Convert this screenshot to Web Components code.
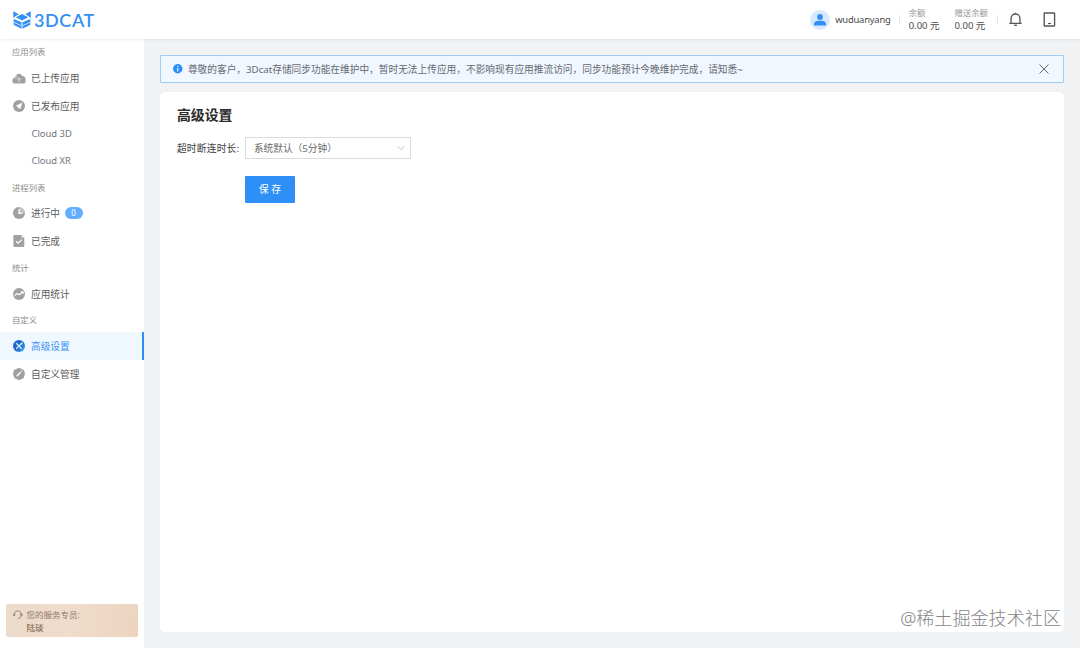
<!DOCTYPE html>
<html lang="zh-CN">
<head>
<meta charset="utf-8">
<title>3DCAT - 高级设置</title>
<style>
  html, body { margin: 0; height: 100%; overflow: hidden; }
  body {
    font-family: "Noto Sans", "Noto Sans CJK SC", sans-serif;
    font-size: 9.7px;
    color: #555;
    background: #f0f2f3;
  }
</style>
</head>
<body>
<cat-app></cat-app>

<script>
/* Icon shapes, all drawn on a 12x12 grid */
const ICONS = {
  upload: '<path fill="#a0a0a0" d="M2.700 4.300A3.400 3.400 0 0 1 9.200 4C11.300 4.200 12.600 5.400 12.600 7.500v1.700c0 1.500-.9 2.300-2.200 2.300H1.700C.3 11.500-.6 10.600-.6 9.200-.6 6.500.8 5 2.700 4.300z"/><path stroke="#e4e4e4" stroke-width="1" fill="none" d="M6 10.200V6.200M4.200 7.500 6 5.700l1.800 1.800M-.2 6.400 4.200 4.500"/>',
  publish: '<circle cx="6" cy="6" r="6" fill="#a0a0a0"/><path fill="#fff" d="M9.300 2.600 7.400 9.200 5.700 7.500 5 8.800 4.700 6.800 2.500 6z"/>',
  running: '<circle cx="6" cy="6" r="6" fill="#a0a0a0"/><path fill="#fff" opacity=".35" d="M6 0a6 6 0 0 1 6 6H6z"/><path stroke="#fff" stroke-width="1.300" fill="none" d="M6 2.300V6.400h3.600"/>',
  done: '<path fill="#a0a0a0" d="M1.400 0h7l2.900 2.800v8a1.200 1.200 0 0 1-1.200 1.200H1.600A1.200 1.200 0 0 1 .4 10.800V1.200Q.4 0 1.400 0z"/><path fill="#ddd" d="M8.400 0v2.800h2.900z"/><path stroke="#fff" stroke-width="1.200" fill="none" d="m3 6.200 2.100 2 3.800-3.600"/>',
  stats: '<circle cx="6" cy="6" r="6" fill="#a0a0a0"/><path stroke="#fff" stroke-width="1.200" fill="none" stroke-linejoin="round" d="m1.600 7.400 2.800-2 1.900 1.300 3.600-2.800M7.900 3.900h2.200v1.900"/>',
  settings: '<defs><linearGradient id="g" x1="0" y1="0" x2="1" y2="1"><stop offset="0" stop-color="#2b6fd6"/><stop offset=".5" stop-color="#1f5fd4"/><stop offset="1" stop-color="#37bdf3"/></linearGradient></defs><circle cx="6" cy="6" r="6" fill="url(#g)"/><path stroke="#d8f4fb" stroke-width="1.300" fill="none" d="m3.300 3.300 5.400 5.400M3.100 8.900l5.600-5.600"/><path stroke="#8fe9cf" stroke-width="1.500" d="M7.600 3.400h2.200M9 2.300v2.200"/>',
  custom: '<path fill="#a0a0a0" d="m6-.200 5 2.200 1 4-1.500 4.300L6 12.200l-4.500-1.900L0 6l1-4z"/><path stroke="#fff" stroke-width="1.400" d="m3.700 8.200 4-4M8.400 3.500l.7-.7"/>',
  info: '<circle cx="6" cy="6" r="6" fill="#2e8ff7"/><path stroke="#fff" stroke-width="1.300" d="M6 2.400v1.400M6 5v4.500"/>',
  close: '<path stroke="#666" stroke-width="1.200" d="m.6.6 10.800 10.800M11.400.6.6 11.400"/>',
  arrow: '<path stroke="#b5b5b5" stroke-width="1.200" fill="none" d="m1 3.300 5 5.300 5-5.300"/>',
  bell: '<path stroke="#555" stroke-width="1.200" fill="none" d="M.3 9.500h11.400M1.900 9.500V5a4.100 4.100 0 0 1 8.200 0v4.500M6 .9V-.3"/><path stroke="#555" stroke-width="1.200" d="M4.600 11.300h2.800"/>',
  tablet: '<rect x="1.100" y="0" width="9.600" height="12" rx=".5" stroke="#555" stroke-width="1.250" fill="none"/><path stroke="#555" stroke-width="1.100" d="M4.600 9.700h2.800"/>',
  service: '<path stroke="#9c8675" stroke-width="1.200" fill="none" d="M2 7.500V5a4 4 0 0 1 8 0v2.500c0 2-1.400 3.200-4 3.500"/><path stroke="#9c8675" stroke-width="2" d="M1.200 4.500v3.200M10.800 4.500v3.200"/>'
};

class CatIcon extends HTMLElement {
  constructor() {
    super();
    this.attachShadow({ mode: 'open' });
  }

  connectedCallback() {
    const size = this.getAttribute('size') || 12;
    this.shadowRoot.innerHTML = `
      <style>
        :host { display: block; flex: none; width: ${size}px; height: ${size}px; }
        svg { display: block; width: 100%; height: 100%; overflow: visible; }
      </style>
      <svg viewBox="0 0 12 12">${ICONS[this.getAttribute('name')] || ''}</svg>
    `;
  }
}

class CatLogo extends HTMLElement {
  constructor() {
    super();
    this.attachShadow({ mode: 'open' }).innerHTML = `
      <style>
        :host {
          display: flex;
          align-items: center;
          gap: 3px;
          color: #348ff3;
          font: 600 18px/20px Lato, "Liberation Sans", sans-serif;
        }
        svg { width: 18px; height: 18px; flex: none; }
        span { letter-spacing: .6px; }
      </style>
      <svg viewBox="0 0 18 18" fill="#348ff3">
        <path d="M.3.300 5.800 3.300 2.400 5.200.300 7.300z"/>
        <path d="M17.700.300 12.200 3.300l3.400 1.900 2.100 2.100z"/>
        <path d="M9 3 15.200 6.200 9 9.400 2.800 6.200z"/>
        <path d="M.700 8 8.500 11.200v6.600L.700 13.800z"/>
        <path d="M17.300 8 9.500 11.200v6.600l7.800-4z"/>
        <path d="m.5 11.200 7.800 3.400M17.500 11.200l-7.800 3.400" stroke="#fff" stroke-width=".7"/>
      </svg>
      <span>3DCAT</span>
    `;
  }
}

class CatBalance extends HTMLElement {
  constructor() {
    super();
    this.attachShadow({ mode: 'open' });
  }

  connectedCallback() {
    this.shadowRoot.innerHTML = `
      <style>
        :host { display: block; white-space: nowrap; }
        .label { font-size: 8.400px; line-height: 12px; color: #999; }
        .value { font-size: 9.500px; line-height: 14px; color: #4a4a4a; }
      </style>
      <div class="label">${this.getAttribute('label')}</div>
      <div class="value"><slot></slot></div>
    `;
  }
}

class CatHeader extends HTMLElement {
  constructor() {
    super();
    this.attachShadow({ mode: 'open' }).innerHTML = `
      <style>
        :host {
          display: flex;
          align-items: center;
          box-sizing: border-box;
          height: 39px;
          padding: 0 24px 0 13px;
          background: #fff;
          box-shadow: 0 1px 2px rgba(0, 0, 0, .07);
          z-index: 1;
        }
        .user { display: flex; align-items: center; gap: 5px; margin-left: auto; }
        .avatar { width: 20px; height: 20px; flex: none; }
        .name { width: 55.500px; font-size: 9.400px; letter-spacing: -.2px; color: #4a4a4a; }
        hr { width: 1px; height: 9px; margin: 0 8.500px; border: 0; background: #e6e6e6; }
        .gift { margin-left: 15px; }
      </style>
      <cat-logo></cat-logo>
      <div class="user">
        <svg class="avatar" viewBox="0 0 20 20">
          <circle cx="10" cy="10" r="10" fill="#d9e9fd"/>
          <circle cx="10" cy="7" r="2.900" fill="#2e8ff7"/>
          <path fill="#2e8ff7" d="M4 15.500v-1.300c0-2 1.800-3.500 4-3.500h4c2.200 0 4 1.500 4 3.500v1.300z"/>
        </svg>
        <span class="name">wuduanyang</span>
      </div>
      <hr>
      <cat-balance label="余额">0.00 元</cat-balance>
      <cat-balance class="gift" label="赠送余额">0.00 元</cat-balance>
      <hr>
      <cat-icon name="bell" size="13" style="margin-left:3px"></cat-icon>
      <cat-icon name="tablet" size="13" style="margin-left:21px"></cat-icon>
    `;
  }
}

class CatGroup extends HTMLElement {
  constructor() {
    super();
    this.attachShadow({ mode: 'open' });
  }

  connectedCallback() {
    this.shadowRoot.innerHTML = `
      <style>
        :host { display: block; }
        .label { height: 24.800px; padding-left: 12px; font-size: 8.400px; line-height: 25px; color: #8c8c8c; }
      </style>
      <div class="label">${this.getAttribute('label')}</div>
      <slot></slot>
    `;
  }
}

class CatItem extends HTMLElement {
  constructor() {
    super();
    this.attachShadow({ mode: 'open' });
  }

  connectedCallback() {
    const icon = this.getAttribute('icon');
    const badge = this.getAttribute('badge');
    this.shadowRoot.innerHTML = `
      <style>
        :host {
          display: flex;
          align-items: center;
          gap: 6.500px;
          box-sizing: border-box;
          height: 27.700px;
          padding-left: 12.500px;
          border-right: 2px solid transparent;
          color: #5c5c5c;
        }
        :host([active]) { color: #3d94f5; background: #f0f8ff; border-color: #2e8ff7; }
        :host([sub]) { padding-left: 31.500px; font-size: 9.400px; color: #70747e; }
        .badge {
          width: 18px;
          height: 12px;
          margin-left: -2px;
          border-radius: 6px;
          font-size: 8px;
          line-height: 12.500px;
          text-align: center;
          color: #fff;
          background: #62adff;
        }
      </style>
      ${icon ? `<cat-icon name="${icon}"></cat-icon>` : ''}
      <span><slot></slot></span>
      ${badge ? `<span class="badge">${badge}</span>` : ''}
    `;
  }
}

class CatSidebar extends HTMLElement {
  constructor() {
    super();
    this.attachShadow({ mode: 'open' }).innerHTML = `
      <style>
        :host {
          display: flex;
          flex-direction: column;
          flex: none;
          box-sizing: border-box;
          width: 144px;
          padding-top: .25px;
          background: #fff;
        }
        .agent {
          display: flex;
          gap: 4px;
          box-sizing: border-box;
          height: 33px;
          margin: auto 6px 11px;
          padding: 4px 7px;
          border-radius: 2px;
          font-size: 8.500px;
          line-height: 13px;
          color: #92796a;
          background: linear-gradient(105deg, #ecdacb, #f0dccb 50%, #ecd4bf);
        }
        .agent cat-icon { margin-top: 2px; }
        .agent b { display: block; font-weight: 400; color: #70543f; }
      </style>
      <cat-group label="应用列表">
        <cat-item icon="upload">已上传应用</cat-item>
        <cat-item icon="publish">已发布应用</cat-item>
        <cat-item sub>Cloud 3D</cat-item>
        <cat-item sub>Cloud XR</cat-item>
      </cat-group>
      <cat-group label="进程列表">
        <cat-item icon="running" badge="0">进行中</cat-item>
        <cat-item icon="done">已完成</cat-item>
      </cat-group>
      <cat-group label="统计">
        <cat-item icon="stats">应用统计</cat-item>
      </cat-group>
      <cat-group label="自定义">
        <cat-item icon="settings" active>高级设置</cat-item>
        <cat-item icon="custom">自定义管理</cat-item>
      </cat-group>
      <div class="agent">
        <cat-icon name="service" size="9.500"></cat-icon>
        <div>您的服务专员:<b>陆琰</b></div>
      </div>
    `;
  }
}

class CatAlert extends HTMLElement {
  constructor() {
    super();
    this.attachShadow({ mode: 'open' }).innerHTML = `
      <style>
        :host {
          display: flex;
          align-items: center;
          box-sizing: border-box;
          height: 28px;
          padding: 0 13.500px 0 12px;
          border: 1px solid #a3cbf3;
          border-radius: 1px;
          background: #f0f7ff;
          color: #666a70;
        }
        p { flex: 1; margin: 0 0 0 5px; white-space: nowrap; }
      </style>
      <cat-icon name="info" size="9.500"></cat-icon>
      <p><slot></slot></p>
      <cat-icon name="close" size="10"></cat-icon>
    `;
  }
}

class CatSelect extends HTMLElement {
  constructor() {
    super();
    this.attachShadow({ mode: 'open' }).innerHTML = `
      <style>
        :host {
          display: flex;
          align-items: center;
          justify-content: space-between;
          box-sizing: border-box;
          width: 166px;
          height: 22px;
          padding: 0 5px 0 8px;
          border: 1px solid #dcdcdc;
          color: #6a6a6a;
        }
      </style>
      <span><slot></slot></span>
      <cat-icon name="arrow" size="8"></cat-icon>
    `;
  }
}

class CatPanel extends HTMLElement {
  constructor() {
    super();
    this.attachShadow({ mode: 'open' }).innerHTML = `
      <style>
        :host {
          display: block;
          flex: 1;
          padding: 14px 16.500px;
          border-radius: 5px;
          background: #fff;
        }
        h1 { margin: 0 0 11px; padding-bottom: 2px; font-size: 13.900px; line-height: 18px; font-weight: 700; color: #2a2a2a; }
        .form { display: grid; grid-template-columns: 68px auto; justify-content: start; align-items: center; row-gap: 17px; }
        label { letter-spacing: .25px; color: #404040; white-space: nowrap; }
        button {
          grid-column: 2;
          width: 50px;
          height: 27.400px;
          padding: 0 0 1px;
          border: 0;
          border-radius: 1px;
          font: inherit;
          color: #fff;
          background: #2e8ff7;
        }
      </style>
      <h1>高级设置</h1>
      <div class="form">
        <label>超时断连时长:</label>
        <cat-select>系统默认（5分钟）</cat-select>
        <button>保 存</button>
      </div>
    `;
  }
}

class CatApp extends HTMLElement {
  constructor() {
    super();
    this.attachShadow({ mode: 'open' }).innerHTML = `
      <style>
        :host { display: flex; flex-direction: column; height: 100vh; }
        .body { display: flex; flex: 1; min-height: 0; }
        main { display: flex; flex-direction: column; flex: 1; gap: 9px; padding: 16px 16.500px 16px 16.400px; }
        .mark {
          position: absolute;
          right: 19px;
          bottom: 17px;
          font-size: 18.100px;
          line-height: 26px;
          font-weight: 300;
          color: #858585;
          text-shadow: 1px 1px 0 #fff;
        }
      </style>
      <cat-header></cat-header>
      <div class="body">
        <cat-sidebar></cat-sidebar>
        <main>
          <cat-alert>尊敬的客户，3Dcat存储同步功能在维护中，暂时无法上传应用，不影响现有应用推流访问，同步功能预计今晚维护完成，请知悉~</cat-alert>
          <cat-panel></cat-panel>
        </main>
      </div>
      <div class="mark">@稀土掘金技术社区</div>
    `;
  }
}

customElements.define('cat-icon', CatIcon);
customElements.define('cat-logo', CatLogo);
customElements.define('cat-balance', CatBalance);
customElements.define('cat-header', CatHeader);
customElements.define('cat-group', CatGroup);
customElements.define('cat-item', CatItem);
customElements.define('cat-sidebar', CatSidebar);
customElements.define('cat-alert', CatAlert);
customElements.define('cat-select', CatSelect);
customElements.define('cat-panel', CatPanel);
customElements.define('cat-app', CatApp);
</script>
</body>
</html>
